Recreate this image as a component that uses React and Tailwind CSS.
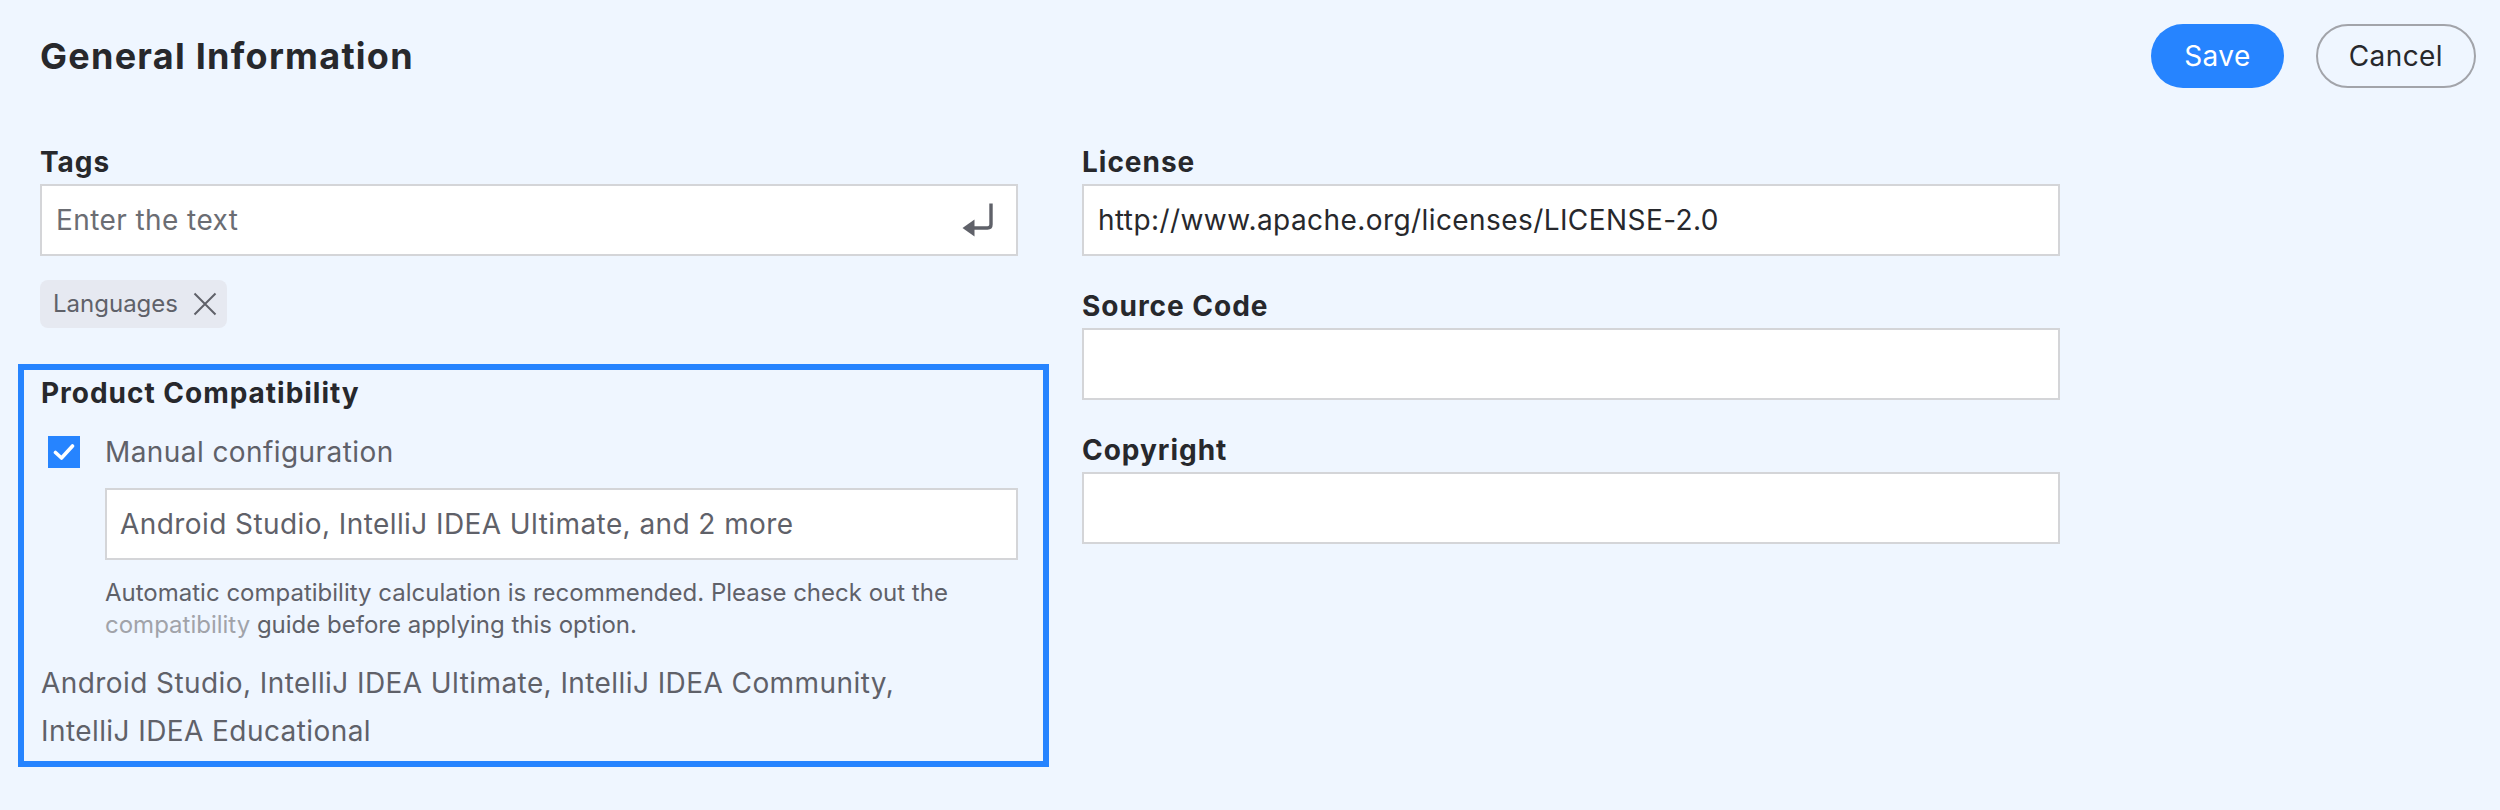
const ReturnIcon = () => (
  <svg width="32" height="34" viewBox="0 0 32 34" fill="none" className="shrink-0">
    <path d="M29 0.5 V21.5 Q29 25 25.5 25 H11" stroke="#5f6169" strokeWidth="3.4" />
    <path d="M0.5 25 L12.5 16.5 V33.5 Z" fill="#5f6169" />
  </svg>
);

const CloseIcon = () => (
  <svg width="24" height="24" viewBox="0 0 24 24" fill="none" className="shrink-0">
    <path d="M1.5 1.5 L22.5 22.5 M22.5 1.5 L1.5 22.5" stroke="#5f6169" strokeWidth="2" />
  </svg>
);

const CheckIcon = () => (
  <svg width="22" height="18" viewBox="0 0 22 18" fill="none">
    <path d="M2.5 9.5 L8.5 15 L19.5 3" stroke="white" strokeWidth="3.6" strokeLinecap="round" strokeLinejoin="round" />
  </svg>
);

const Field = ({ label, value, first }) => (
  <div className={first ? "" : "mt-[30px]"}>
    <div className="text-[28px] font-bold leading-10 tracking-[0.035em] mb-[2px]">{label}</div>
    <div className="h-[72px] border-2 border-[#d4d5d8] bg-white flex items-center pl-[14px]">
      <span className="text-[28px] tracking-[0.015em] text-[#27282c]">{value}</span>
    </div>
  </div>
);

export default function App() {
  return (
    <div className="min-h-screen w-[2500px] bg-[#eff6ff] font-['Inter','Noto_Sans',sans-serif] text-[#27282c]">
      <header className="flex items-center justify-between pl-10 pr-6 pt-6">
        <h1 className="text-[36px] font-bold leading-[64px] tracking-[0.035em]">General Information</h1>
        <div className="flex gap-8">
          <button className="h-16 px-[33px] rounded-full bg-[#2684ff] text-white text-[28px] tracking-[0.015em]">
            Save
          </button>
          <button className="h-16 px-[31px] rounded-full border-2 border-[#a2a4aa] text-[28px] tracking-[0.015em] text-[#27282c]">
            Cancel
          </button>
        </div>
      </header>

      <div className="flex gap-16 px-10 pt-[54px]">
        {/* left column */}
        <div className="w-[978px] shrink-0">
          <div className="text-[28px] font-bold leading-10 tracking-[0.035em] mb-[2px]">Tags</div>
          <div className="h-[72px] border-2 border-[#d4d5d8] bg-white flex items-center pl-[14px] pr-[22px]">
            <span className="flex-1 text-[28px] tracking-[0.015em] text-[#6b6d73]">Enter the text</span>
            <ReturnIcon />
          </div>
          <div className="mt-6 inline-flex h-12 items-center rounded-lg bg-[#e6e9f1] pl-[13px] pr-[10px] gap-[15px]">
            <span className="text-[24px] text-[#5f6169]">Languages</span>
            <CloseIcon />
          </div>

          <div className="mt-9 -ml-[22px] -mr-[31px] border-[6px] border-[#2684ff] pl-[17px] pr-[25px] pt-[3px] pb-[6px]">
            <div className="text-[28px] font-bold leading-10 tracking-[0.035em]">Product Compatibility</div>
            <div className="mt-[19px] h-10 flex items-center">
              <div className="ml-[7px] w-8 h-8 bg-[#2684ff] flex items-center justify-center">
                <CheckIcon />
              </div>
              <span className="ml-[25px] text-[28px] leading-10 tracking-[0.015em] text-[#5f6169]">
                Manual configuration
              </span>
            </div>
            <div className="mt-4 ml-[64px] h-[72px] border-2 border-[#d4d5d8] bg-white flex items-center pl-[13px]">
              <span className="text-[28px] tracking-[0.015em] text-[#5f6169]">
                Android Studio, IntelliJ IDEA Ultimate, and 2 more
              </span>
            </div>
            <p className="ml-[64px] mt-[17px] text-[24px] leading-8 text-[#5f6169]">
              Automatic compatibility calculation is recommended. Please check out the{" "}
              <span className="text-[#a1a3a9]">compatibility</span> guide before applying this option.
            </p>
            <p className="mt-[18px] max-w-[900px] text-[28px] leading-[48px] tracking-[0.015em] text-[#5f6169]">
              Android Studio, IntelliJ IDEA Ultimate, IntelliJ IDEA Community, IntelliJ IDEA Educational
            </p>
          </div>
        </div>

        {/* right column */}
        <div className="w-[978px] shrink-0">
          <Field first label="License" value="http://www.apache.org/licenses/LICENSE-2.0" />
          <Field label="Source Code" value="" />
          <Field label="Copyright" value="" />
        </div>
      </div>
    </div>
  );
}
